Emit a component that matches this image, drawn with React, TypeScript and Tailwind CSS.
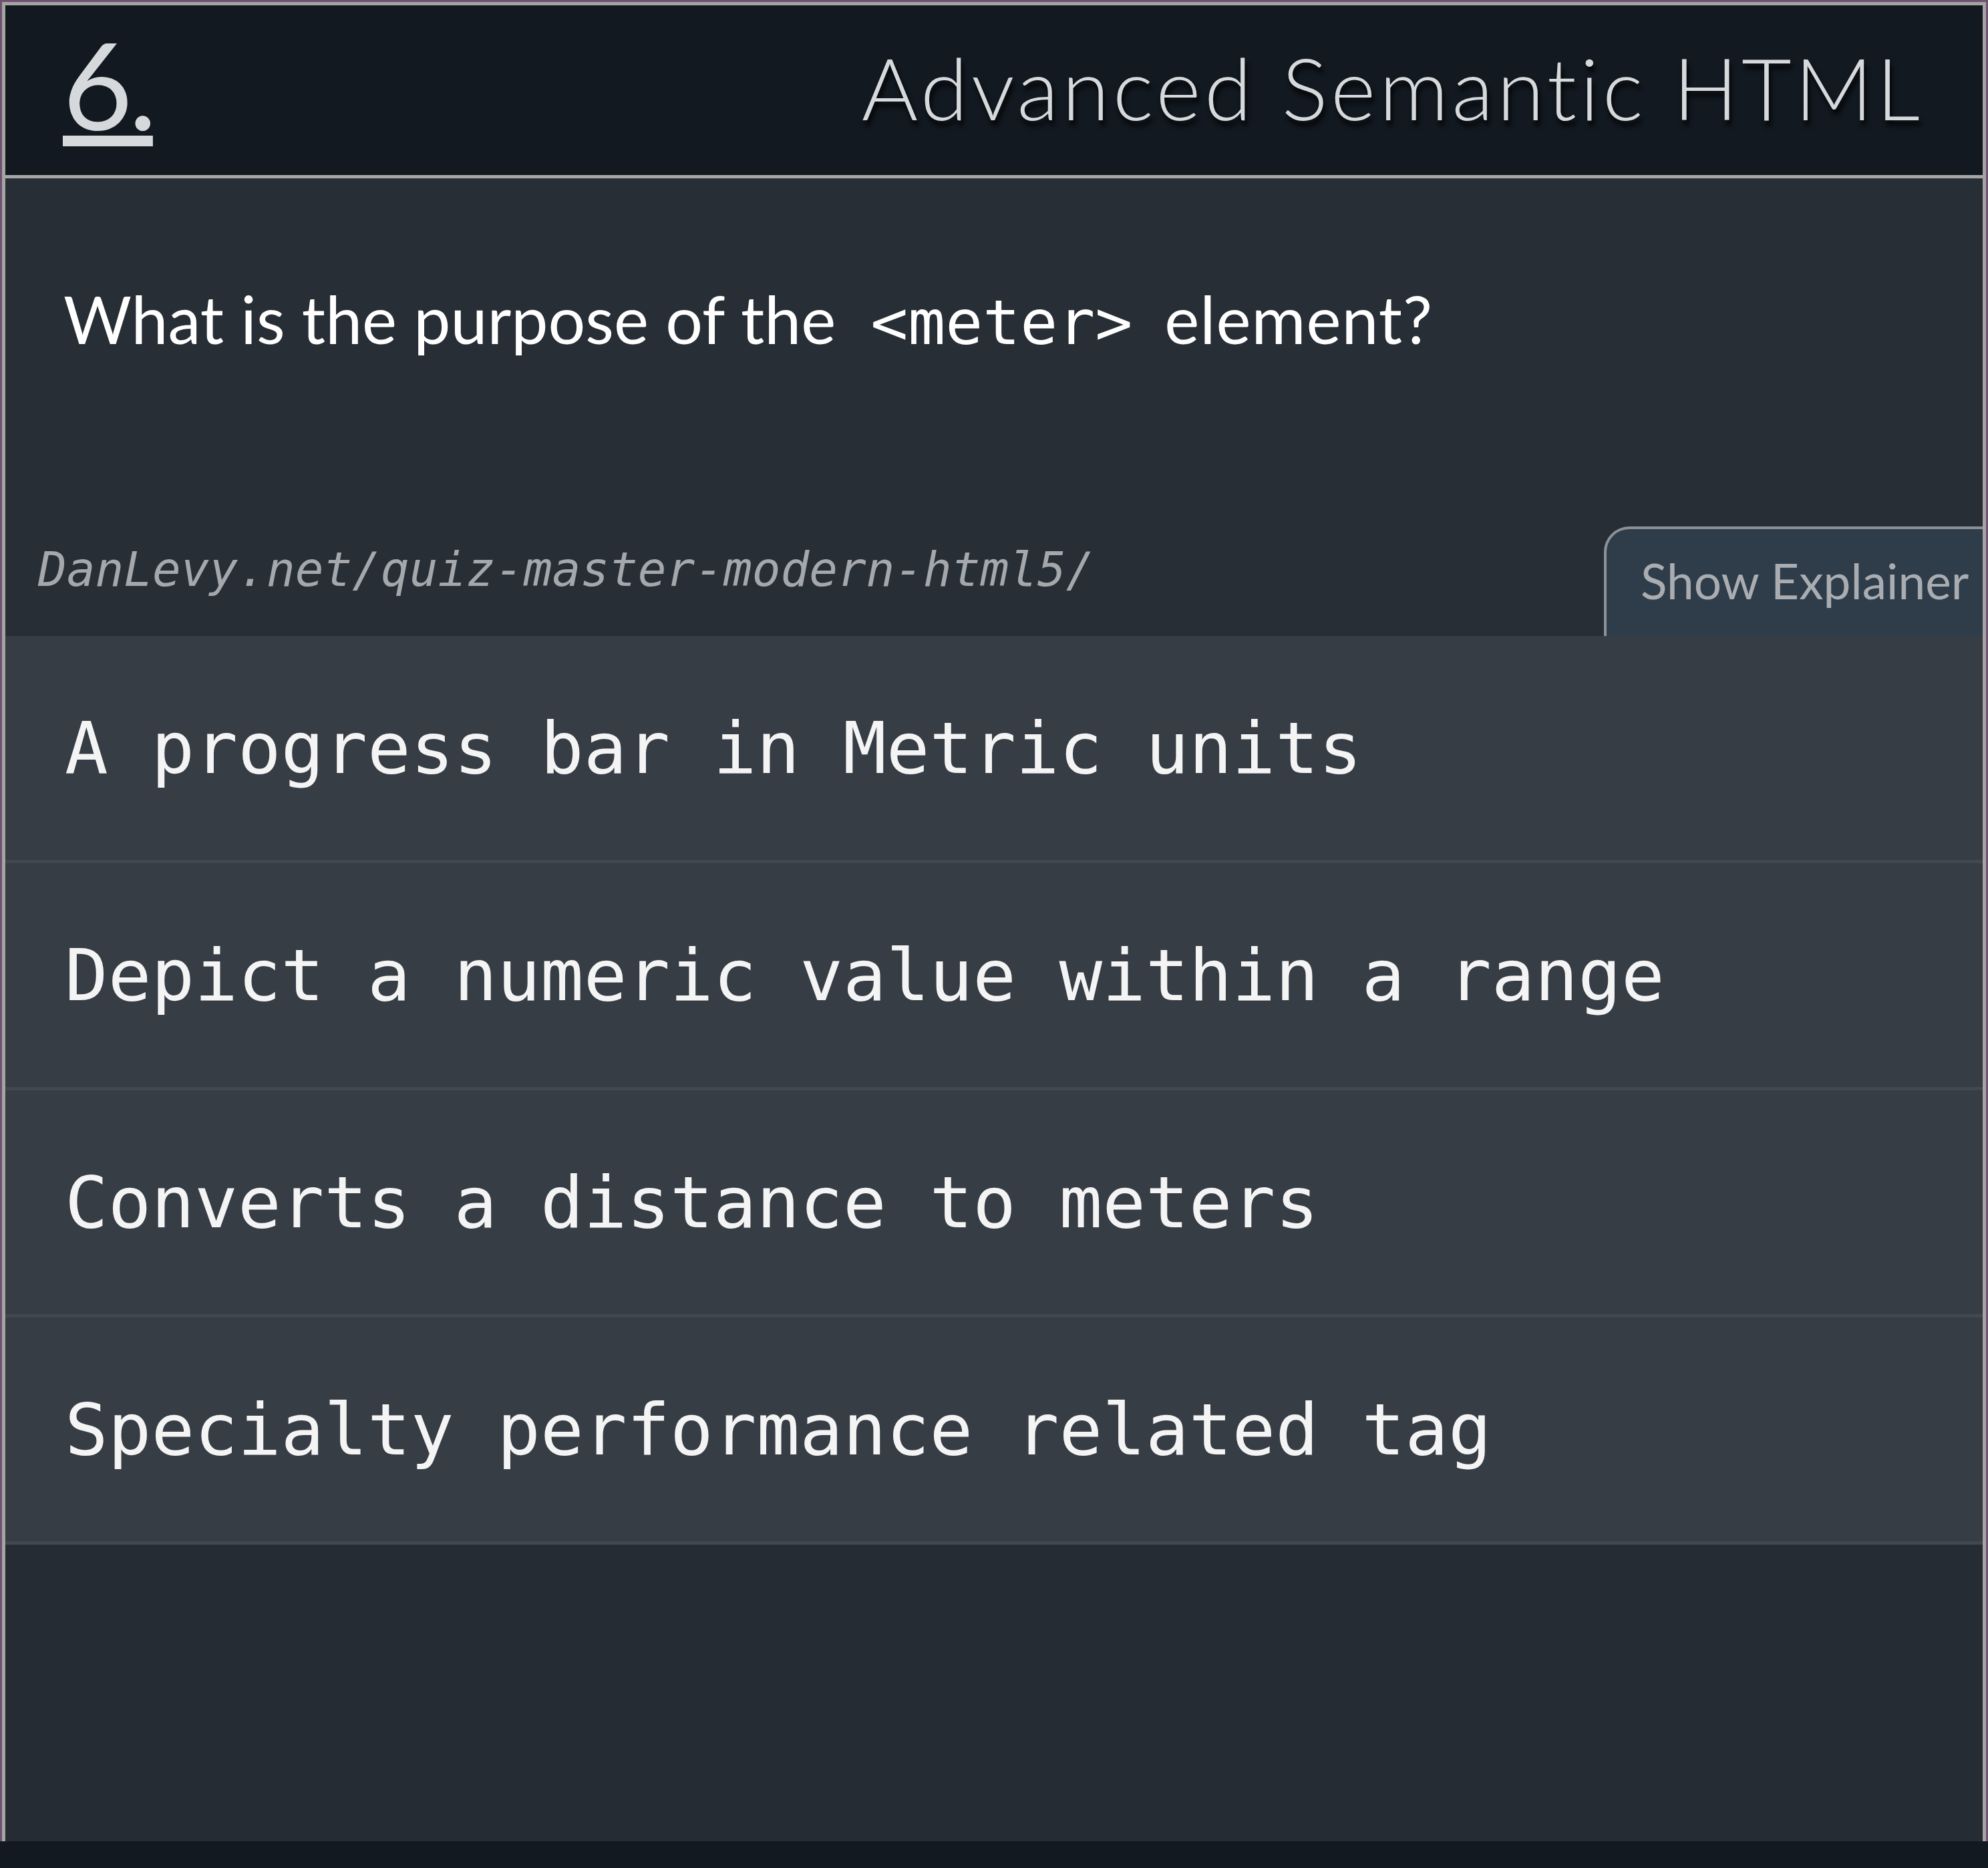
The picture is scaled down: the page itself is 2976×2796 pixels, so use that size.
const answers = [
  'A progress bar in Metric units',
  'Depict a numeric value within a range',
  'Converts a distance to meters',
  'Specialty performance related tag',
];

export default function App() {
  return (
    <div className="w-[2976px] h-[2796px] bg-[#121920] flex flex-col">
      <div className="h-[2756px] border-t-[3px] border-x-[3px] border-[#6f5070] flex flex-col">
        <div className="flex-1 border-t-[5px] border-x-[5px] border-[#a4a4a4] bg-[#252c34] flex flex-col overflow-hidden">
          {/* Header */}
          <header className="h-[259px] shrink-0 bg-[#121920] border-b-[5px] border-[#a6a6a6] flex items-start justify-between pl-[86px] pr-[89px] font-['Lato',sans-serif] text-[#d6d9dc] [font-variant-ligatures:none]">
            <a className="mt-[27px] text-[180px] leading-none font-normal underline decoration-[16px] underline-offset-[8px] tracking-[-6px]">
              6.
            </a>
            <h1 className="mt-[58px] text-[129px] leading-none font-light tracking-[5px] [text-shadow:3px_8px_7px_rgba(0,0,0,0.85)]">
              Advanced Semantic HTML
            </h1>
          </header>

          {/* Question */}
          <section className="h-[521px] shrink-0 bg-[#272e35] pt-[161px] pl-[87px]">
            <h2 className="text-[98.5px] leading-none font-['Lato',sans-serif] text-white [font-variant-ligatures:none]">
              What is the purpose of the
              <code className="pl-[52px] pr-[48px] text-[93px] font-['DejaVu_Sans_Mono',monospace]">&lt;meter&gt;</code>
              <span className="tracking-[1px]">element?</span>
            </h2>
          </section>

          {/* Source + explainer toggle */}
          <div className="h-[164px] shrink-0 bg-[#272e35] flex items-start">
            <span className="pt-[29px] pl-[49px] text-[71px] leading-none italic font-['DejaVu_Sans_Mono',monospace] text-[#a4a8ad]">
              DanLevy.net/quiz-master-modern-html5/
            </span>
            <button className="ml-auto h-[164px] w-[567px] flex items-center pl-[51px] pb-[6px] border-t-4 border-l-4 border-[#8b9196] rounded-tl-[38px] bg-[#2f3d4a] text-[73px] leading-none font-['Lato',sans-serif] text-[#a9adb1] whitespace-nowrap">
              Show Explainer
            </button>
          </div>

          {/* Answers */}
          <ul className="flex flex-col">
            {answers.map((a) => (
              <li
                key={a}
                className="h-[340px] flex items-center pl-[89px] bg-[#363d45] border-b-[5px] border-[#41484f] text-[107.5px] leading-none font-['DejaVu_Sans_Mono',monospace] text-[#f4f4f4] whitespace-pre"
              >
                {a}
              </li>
            ))}
          </ul>
        </div>
      </div>
    </div>
  );
}
